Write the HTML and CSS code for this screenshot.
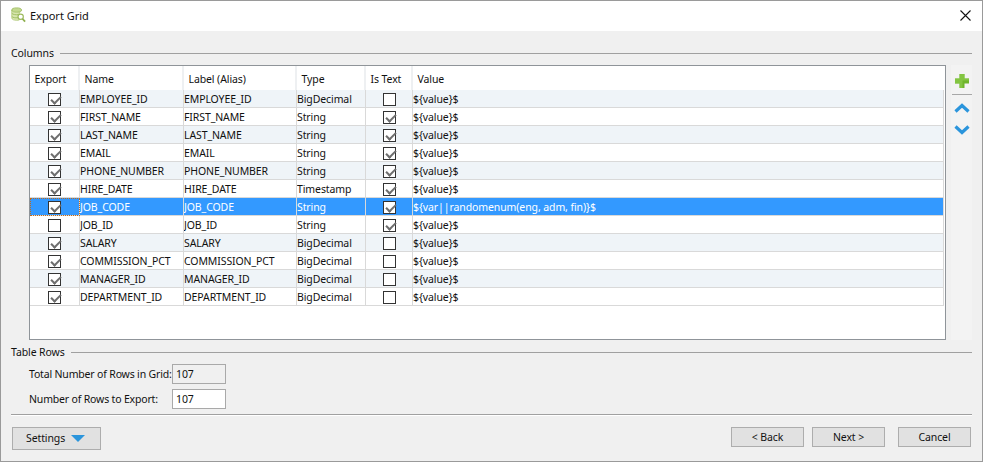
FILE: index.html
```html
<!DOCTYPE html>
<html lang="en">
<head>
<meta charset="utf-8">
<title>Export Grid</title>
<link rel="stylesheet" href="styles.css">
</head>
<body>
<div class="dialog">
  <header class="titlebar">
    <svg class="app-icon" width="16" height="16" viewBox="0 0 18 18">
      <ellipse cx="7.5" cy="3.5" rx="5.5" ry="2.5" fill="#c3d98f" stroke="#9dbb5e"/>
      <path d="M2 3.5v9c0 1.5 2.5 2.5 5.5 2.5 1 0 2-.1 3-.4V5.600c-1 .3-2 .4-3 .4C4.500 6 2 5 2 3.500z" fill="#d7e6ae" stroke="#a9c46c" stroke-width=".8"/>
      <path d="M2 7c1 1.500 5 2.300 8 1.300M2 10.500c1 1.500 4 2 7 1.500" fill="none" stroke="#9dbb5e"/>
      <circle cx="12" cy="11" r="3" fill="#fff" stroke="#9dbb5e" stroke-width="1.300"/>
      <path d="M14 13.200l3 3.300" stroke="#8fb04f" stroke-width="2"/>
    </svg>
    <span class="title">Export Grid</span>
    <svg class="close" width="11" height="11" viewBox="0 0 11 11"><path d="M.5.500l10 10M10.500.500l-10 10" stroke="#111" stroke-width="1.100" fill="none"/></svg>
  </header>

  <main class="body">
    <div class="legend legend-columns"><span>Columns</span><i class="rule"></i></div>
    <div class="columns-area">
      <div class="grid-frame">
        <table class="grid">
          <colgroup>
            <col class="c-export"><col class="c-name"><col class="c-label"><col class="c-type"><col class="c-istext"><col class="c-value">
          </colgroup>
          <thead>
            <tr><th>Export</th><th>Name</th><th>Label (Alias)</th><th>Type</th><th>Is Text</th><th>Value</th></tr>
          </thead>
          <tbody>
            <tr class="alt"><td class="chk"><span class="box on"></span></td><td>EMPLOYEE_ID</td><td>EMPLOYEE_ID</td><td>BigDecimal</td><td class="chk"><span class="box"></span></td><td>${value}$</td></tr>
            <tr><td class="chk"><span class="box on"></span></td><td>FIRST_NAME</td><td>FIRST_NAME</td><td>String</td><td class="chk"><span class="box on"></span></td><td>${value}$</td></tr>
            <tr class="alt"><td class="chk"><span class="box on"></span></td><td>LAST_NAME</td><td>LAST_NAME</td><td>String</td><td class="chk"><span class="box on"></span></td><td>${value}$</td></tr>
            <tr><td class="chk"><span class="box on"></span></td><td>EMAIL</td><td>EMAIL</td><td>String</td><td class="chk"><span class="box on"></span></td><td>${value}$</td></tr>
            <tr class="alt"><td class="chk"><span class="box on"></span></td><td>PHONE_NUMBER</td><td>PHONE_NUMBER</td><td>String</td><td class="chk"><span class="box on"></span></td><td>${value}$</td></tr>
            <tr><td class="chk"><span class="box on"></span></td><td>HIRE_DATE</td><td>HIRE_DATE</td><td>Timestamp</td><td class="chk"><span class="box on"></span></td><td>${value}$</td></tr>
            <tr class="sel"><td class="chk focus"><span class="box on"></span></td><td>JOB_CODE</td><td>JOB_CODE</td><td>String</td><td class="chk"><span class="box on"></span></td><td>${var||randomenum(eng, adm, fin)}$</td></tr>
            <tr><td class="chk"><span class="box"></span></td><td>JOB_ID</td><td>JOB_ID</td><td>String</td><td class="chk"><span class="box on"></span></td><td>${value}$</td></tr>
            <tr class="alt"><td class="chk"><span class="box on"></span></td><td>SALARY</td><td>SALARY</td><td>BigDecimal</td><td class="chk"><span class="box"></span></td><td>${value}$</td></tr>
            <tr><td class="chk"><span class="box on"></span></td><td>COMMISSION_PCT</td><td>COMMISSION_PCT</td><td>BigDecimal</td><td class="chk"><span class="box"></span></td><td>${value}$</td></tr>
            <tr class="alt"><td class="chk"><span class="box on"></span></td><td>MANAGER_ID</td><td>MANAGER_ID</td><td>BigDecimal</td><td class="chk"><span class="box"></span></td><td>${value}$</td></tr>
            <tr><td class="chk"><span class="box on"></span></td><td>DEPARTMENT_ID</td><td>DEPARTMENT_ID</td><td>BigDecimal</td><td class="chk"><span class="box"></span></td><td>${value}$</td></tr>
          </tbody>
        </table>
      </div>
      <div class="side-tools">
        <svg class="tool-plus" width="16" height="16" viewBox="0 0 16 16">
          <path d="M5.500 1h5v4.500H15v5h-4.500V15h-5v-4.500H1v-5h4.500z" fill="#6fb52c"/>
          <path d="M5.500 1h5v4.500H15v2H8.500V15h-3v-4.500H1v-5h4.500z" fill="#8ccc4a" opacity=".7"/>
        </svg>
        <i class="tool-sep"></i>
        <svg class="tool-chev" width="16" height="10" viewBox="0 0 16 10"><path d="M1.500 8.500L8 2.500l6.500 6" fill="none" stroke="#2b95dc" stroke-width="3.200"/></svg>
        <svg class="tool-chev down" width="16" height="10" viewBox="0 0 16 10"><path d="M1.500 1.500L8 7.500l6.500-6" fill="none" stroke="#2b95dc" stroke-width="3.200"/></svg>
      </div>
    </div>

    <div class="legend legend-rows"><span>Table Rows</span><i class="rule"></i></div>
    <div class="form">
      <label class="form-row"><span class="form-label">Total Number of Rows in Grid:</span><span class="field readonly">107</span></label>
      <label class="form-row"><span class="form-label">Number of Rows to Export:</span><span class="field">107</span></label>
    </div>
    <div class="divider"></div>
    <footer class="actions">
      <button class="btn settings" type="button">Settings
        <svg class="settings-arrow" width="14" height="7" viewBox="0 0 14 7"><path d="M0 0h14L7 7z" fill="#2b95dc"/></svg>
      </button>
      <div class="nav">
        <button class="btn" type="button">&lt; Back</button>
        <button class="btn" type="button">Next &gt;</button>
        <button class="btn cancel" type="button">Cancel</button>
      </div>
    </footer>
  </main>
</div>
</body>
</html>
```

FILE: styles.css
```css
* { box-sizing: border-box; }
html, body { margin: 0; padding: 0; }
body {
  width: 983px;
  height: 462px;
  overflow: hidden;
  font-family: "Noto Sans", "Liberation Sans", sans-serif;
  font-size: 10.5px;
  letter-spacing: -0.1px;
  color: #111;
  background: #f0f0f0;
}
.dialog {
  width: 983px;
  height: 462px;
  border: 1px solid #9a9a9a;
  display: flex;
  flex-direction: column;
  background: #f0f0f0;
}
.titlebar {
  height: 30px;
  flex: none;
  background: #fff;
  display: flex;
  align-items: center;
  padding: 0 11px 2px 9px;
}
.app-icon { flex: none; margin-right: 4px; }
.title { font-size: 11px; letter-spacing: 0; flex: 1; }
.body { flex: 1; display: flex; flex-direction: column; padding: 0 10px 0 10px; min-height: 0; }
.legend { display: flex; align-items: center; height: 14px; flex: none; }
.legend span { margin-right: 6px; }
.rule { flex: 1; height: 1px; background: #a0a0a0; }
.legend-columns { margin-top: 15px; }
.columns-area { display: flex; margin: 5px 0 0 18px; height: 275px; flex: none; }
.grid-frame {
  width: 917px;
  height: 275px;
  flex: none;
  border: 1px solid #8f9499;
  background: #fff;
  padding-right: 1px;
}
.grid { border-collapse: separate; border-spacing: 0; table-layout: fixed; width: 914px; }
.c-export { width: 50px; }
.c-name { width: 104px; }
.c-label { width: 113px; }
.c-type { width: 69px; }
.c-istext { width: 47px; }
.c-value { width: 531px; }
.grid th {
  height: 24px;
  font-weight: 400;
  text-align: left;
  padding: 2px 0 0 4.5px;
  background: #fff;
  border-right: 2px solid #eef0f2;
}
.grid td {
  height: 18px;
  padding: 2px 0 0 0;
  border-right: 1px solid #d9d9d9;
  border-bottom: 1px solid #d9d9d9;
  white-space: nowrap;
  overflow: hidden;
  line-height: 15px;
  vertical-align: top;
}
.grid th:last-child { border-right: 0; }
.alt td { background: #eff4f8; }
.sel td { background: #3399ff; color: #fff; }
.grid td.chk { padding: 0; }
.focus { outline: 1px dotted #c06a1a; outline-offset: -1px; }
.box {
  display: block;
  width: 13px;
  height: 13px;
  margin: 3px auto 0;
  background: #fff;
  border: 1px solid #333;
  position: relative;
}
.box.on::after {
  content: "";
  position: absolute;
  left: 2px;
  top: 2px;
  width: 8px;
  height: 4px;
  border-left: 2px solid #6e6e6e;
  border-bottom: 2px solid #6e6e6e;
  transform: rotate(-45deg);
}
.side-tools {
  width: 22px;
  margin-left: 5px;
  height: 275px;
  background: #f3f3f3;
  display: flex;
  flex-direction: column;
  align-items: center;
  padding-top: 8px;
}
.tool-sep { width: 20px; height: 1px; background: #a8a8a8; margin: 5px 0 8px; flex: none; }
.tool-chev { flex: none; }
.tool-chev.down { margin-top: 12px; }
.legend-rows { margin-top: 5px; }
.form { margin: 5px 0 0 18px; display: flex; flex-direction: column; gap: 5px; }
.form-row { display: flex; align-items: center; height: 20px; }
.form-label { width: 143px; flex: none; white-space: nowrap; letter-spacing: -0.17px; }
.field {
  width: 54px;
  height: 20px;
  border: 1px solid #a9a9a9;
  background: #fff;
  padding-left: 3px;
  line-height: 18px;
}
.field.readonly { background: #f0f0f0; }
.divider { height: 2px; margin-top: 5px; border-top: 1px solid #a0a0a0; background: #fff; flex: none; width: 961px; }
.actions { display: flex; justify-content: space-between; align-items: flex-start; margin-top: 11px; padding: 0 1px 0 1px; }
.btn {
  font: inherit;
  letter-spacing: inherit;
  color: #111;
  width: 73px;
  height: 20px;
  border: 1px solid #adadad;
  background: #e1e1e1;
  padding: 0;
}
.settings { width: 89px; height: 23px; display: flex; align-items: center; padding: 0 0 2px 13px; gap: 6px; }
.settings-arrow { margin-top: 2px; }
.nav { display: flex; gap: 8px; }
.cancel { margin-left: 5px; }
```
